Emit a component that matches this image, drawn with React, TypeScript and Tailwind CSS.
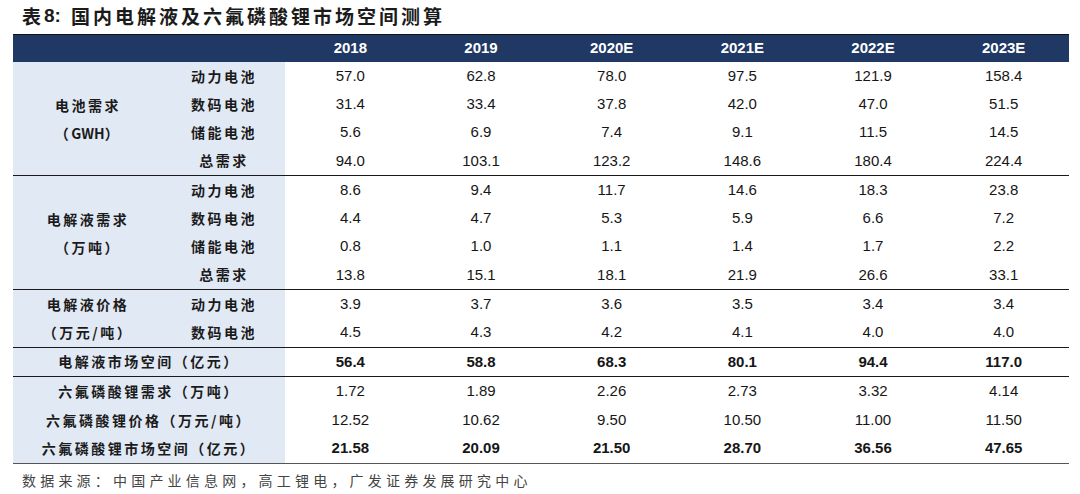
import React from 'react';

type Row = { label: string; values: string[] };

const groups: { title: React.ReactNode[]; rows: Row[] }[] = [
  {
    title: ["电池需求", <span key="g">（<span className="tracking-normal">GWH</span>）</span>],
    rows: [
      { label: "动力电池", values: ["57.0", "62.8", "78.0", "97.5", "121.9", "158.4"] },
      { label: "数码电池", values: ["31.4", "33.4", "37.8", "42.0", "47.0", "51.5"] },
      { label: "储能电池", values: ["5.6", "6.9", "7.4", "9.1", "11.5", "14.5"] },
      { label: "总需求", values: ["94.0", "103.1", "123.2", "148.6", "180.4", "224.4"] },
    ],
  },
  {
    title: ["电解液需求", "（万吨）"],
    rows: [
      { label: "动力电池", values: ["8.6", "9.4", "11.7", "14.6", "18.3", "23.8"] },
      { label: "数码电池", values: ["4.4", "4.7", "5.3", "5.9", "6.6", "7.2"] },
      { label: "储能电池", values: ["0.8", "1.0", "1.1", "1.4", "1.7", "2.2"] },
      { label: "总需求", values: ["13.8", "15.1", "18.1", "21.9", "26.6", "33.1"] },
    ],
  },
  {
    title: ["电解液价格", "（万元/吨）"],
    rows: [
      { label: "动力电池", values: ["3.9", "3.7", "3.6", "3.5", "3.4", "3.4"] },
      { label: "数码电池", values: ["4.5", "4.3", "4.2", "4.1", "4.0", "4.0"] },
    ],
  },
];

const marketRow: Row = { label: "电解液市场空间（亿元）", values: ["56.4", "58.8", "68.3", "80.1", "94.4", "117.0"] };

const lipf6Rows: (Row & { bold?: boolean })[] = [
  { label: "六氟磷酸锂需求（万吨）", values: ["1.72", "1.89", "2.26", "2.73", "3.32", "4.14"] },
  { label: "六氟磷酸锂价格（万元/吨）", values: ["12.52", "10.62", "9.50", "10.50", "11.00", "11.50"] },
  { label: "六氟磷酸锂市场空间（亿元）", values: ["21.58", "20.09", "21.50", "28.70", "36.56", "47.65"], bold: true },
];

const years = ["2018", "2019", "2020E", "2021E", "2022E", "2023E"];

const Values = ({ values, bold }: { values: string[]; bold?: boolean }) => (
  <div className="flex-1 grid grid-cols-6">
    {values.map((v, i) => (
      <div
        key={i}
        className={`flex items-center justify-center text-[15px] text-[#161616] ${bold ? "font-bold" : ""}`}
      >
        {v}
      </div>
    ))}
  </div>
);

const App = () => {
  return (
    <div
      className="w-[1080px] h-[494px] bg-white overflow-hidden pl-[13px]"
      style={{ fontFamily: "'Liberation Sans', 'Noto Sans CJK SC', sans-serif" }}
    >
      {/* Title */}
      <div className="h-[34px] flex items-center pl-[9px] pb-[2px] text-[19px] font-bold text-[#1b1b1b] tracking-[3px]">
        <span style={{ fontFamily: "'Noto Sans CJK SC', sans-serif" }}>表</span>
        <span className="tracking-normal">8:</span>
        <span className="ml-[10px]" style={{ fontFamily: "'Noto Sans CJK SC', sans-serif" }}>
          国内电解液及六氟磷酸锂市场空间测算
        </span>
      </div>

      <div className="w-[1056px]">
        {/* Header */}
        <div className="h-[28px] flex bg-[#203864] border-t border-[#0b1220]">
          <div className="w-[272px]" />
          <div className="flex-1 grid grid-cols-6">
            {years.map((y) => (
              <div key={y} className="flex items-center justify-center text-white font-bold text-[15px]">
                {y}
              </div>
            ))}
          </div>
        </div>

        {/* Grouped rows */}
        {groups.map((g, gi) => (
          <div key={gi} className="flex border-b-[1.5px] border-[#1a1a1a]">
            <div
              className="w-[272px] bg-[#e1e9f5] flex font-bold text-[14px] text-[#1b1b1b] tracking-[2.5px]"
              style={{ fontFamily: "'Noto Sans CJK SC', sans-serif" }}
            >
              <div className="w-[150px] flex flex-col items-center justify-center leading-[28px]">
                {g.title.map((t, ti) => (
                  <div key={ti}>{t}</div>
                ))}
              </div>
              <div className="w-[122px] flex flex-col">
                {g.rows.map((r, ri) => (
                  <div key={ri} className="h-[28.25px] flex items-center justify-center">
                    {r.label}
                  </div>
                ))}
              </div>
            </div>
            <div className="flex-1 flex flex-col">
              {g.rows.map((r, ri) => (
                <div key={ri} className="h-[28.25px] flex">
                  <Values values={r.values} />
                </div>
              ))}
            </div>
          </div>
        ))}

        {/* Electrolyte market size */}
        <div className="flex h-[29.75px] border-b-[1.5px] border-[#1a1a1a]">
          <div
            className="w-[272px] bg-[#e1e9f5] flex items-center justify-center font-bold text-[14px] text-[#1b1b1b] tracking-[2.5px]"
            style={{ fontFamily: "'Noto Sans CJK SC', sans-serif" }}
          >
            {marketRow.label}
          </div>
          <Values values={marketRow.values} bold />
        </div>

        {/* LiPF6 rows */}
        <div className="border-b-[1.5px] border-[#555]">
          {lipf6Rows.map((r, ri) => (
            <div key={ri} className="flex h-[28.5px]">
              <div
                className="w-[272px] bg-[#e1e9f5] flex items-center justify-center font-bold text-[14px] text-[#1b1b1b] tracking-[2.5px]"
                style={{ fontFamily: "'Noto Sans CJK SC', sans-serif" }}
              >
                {r.label}
              </div>
              <Values values={r.values} bold={r.bold} />
            </div>
          ))}
        </div>
      </div>

      {/* Source */}
      <div
        className="pl-[9px] pt-[6px] text-[14px] text-[#444] tracking-[4.2px]"
        style={{ fontFamily: "'Noto Sans CJK SC', sans-serif" }}
      >
        数据来源：中国产业信息网，高工锂电，广发证券发展研究中心
      </div>
    </div>
  );
};

export default App;
